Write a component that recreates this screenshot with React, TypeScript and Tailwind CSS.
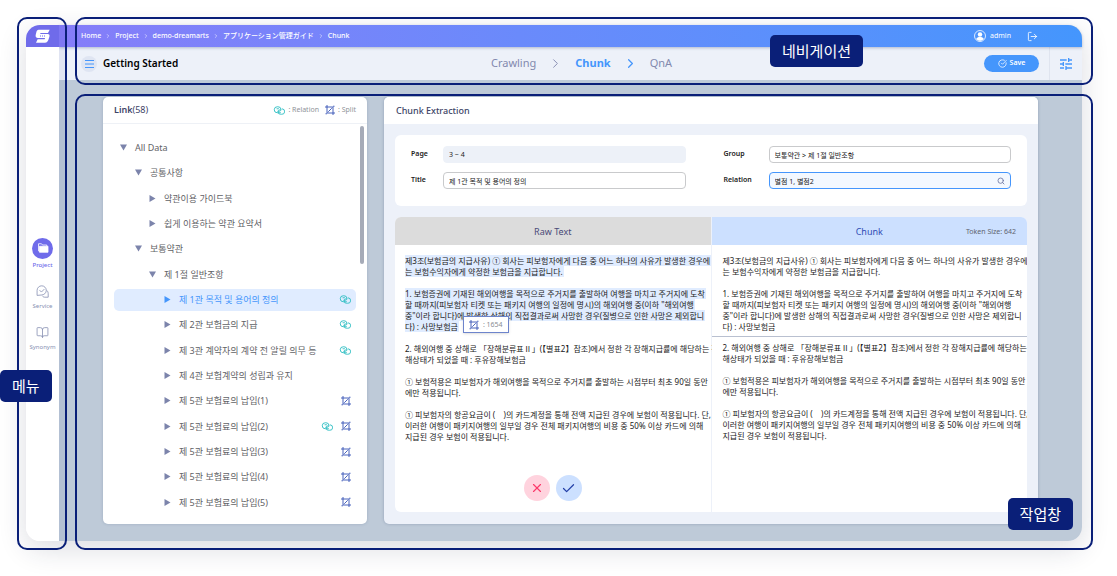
import React, { useState } from 'react';
import { BookOpen, Check, ChevronRight, CircleCheckBig, LogOut, Search, X } from 'lucide-react';
import { MdTune } from 'react-icons/md';
import clsx from 'clsx';

interface TreeItem {
  id: string;
  label: string;
  level: 0 | 1 | 2 | 3;
  open?: boolean;
  relation?: boolean;
  split?: boolean;
}

const TREE: TreeItem[] = [
  { id: 'all', label: 'All Data', level: 0, open: true },
  { id: 'common', label: '공통사항', level: 1, open: true },
  { id: 'guide', label: '약관이용 가이드북', level: 2 },
  { id: 'easy', label: '쉽게 이용하는 약관 요약서', level: 2 },
  { id: 'terms', label: '보통약관', level: 1, open: true },
  { id: 'section1', label: '제 1절 일반조항', level: 2, open: true },
  { id: 'part1', label: '제 1관 목적 및 용어의 정의', level: 3, relation: true },
  { id: 'part2', label: '제 2관 보험금의 지급', level: 3, relation: true },
  { id: 'part3', label: '제 3관 계약자의 계약 전 알릴 의무 등', level: 3, relation: true },
  { id: 'part4', label: '제 4관 보험계약의 성립과 유지', level: 3 },
  { id: 'part5-1', label: '제 5관 보험료의 납입(1)', level: 3, split: true },
  { id: 'part5-2', label: '제 5관 보험료의 납입(2)', level: 3, relation: true, split: true },
  { id: 'part5-3', label: '제 5관 보험료의 납입(3)', level: 3, split: true },
  { id: 'part5-4', label: '제 5관 보험료의 납입(4)', level: 3, split: true },
  { id: 'part5-5', label: '제 5관 보험료의 납입(5)', level: 3, split: true },
];

const INDENT = ['pl-[6px]', 'pl-[21px]', 'pl-[35px]', 'pl-[50px]'];

const INTRO = [
  '제3조(보험금의 지급사유) ① 회사는 피보험자에게 다음 중 어느 하나의 사유가 발생한 경우에',
  '는 보험수익자에게 약정한 보험금을 지급합니다.',
];

const CLAUSE_1 = [
  '1. 보험증권에 기재된 해외여행을 목적으로 주거지를 출발하여 여행을 마치고 주거지에 도착',
  '할 때까지(피보험자 티켓 또는 패키지 여행의 일정에 명시)의 해외여행 중(이하 "해외여행',
  '중"이라 합니다)에 발생한 상해의 직접결과로써 사망한 경우(질병으로 인한 사망은 제외합니',
  '다) : 사망보험금',
];

const REST = [
  [
    '2. 해외여행 중 상해로 「장해분류표Ⅱ」(【별표2】참조)에서 정한 각 장해지급률에 해당하는 장',
    '해상태가 되었을 때 : 후유장해보험금',
  ],
  [
    '① 보험적용은 피보험자가 해외여행을 목적으로 주거지를 출발하는 시점부터 최초 90일 동안',
    '에만 적용됩니다.',
  ],
  [
    '① 피보험자의 항공요금이 (    )의 카드계정을 통해 전액 지급된 경우에 보험이 적용됩니다. 단,',
    '이러한 여행이 패키지여행의 일부일 경우 전체 패키지여행의 비용 중 50% 이상 카드에 의해',
    '지급된 경우 보험이 적용됩니다.',
  ],
];

/* ---------- icons ---------- */

function Logo() {
  return (
    <svg viewBox="0 0 45 42" className="h-[14px] w-[15px]" fill="#fff">
      <path d="M11 2h33l-5 10H17c-2 0-2 3 0 3h21c5 0 7 4 5 9l-3 9c-2 5-5 8-10 8H3l5-10h20c3 0 3-4 0-4H9c-6 0-8-4-7-9l2-8c1-5 3-8 7-8z" />
      <path d="M15 21h3m3 0h3m3 0h3" stroke="#6b68ea" strokeWidth="3" />
    </svg>
  );
}

function RelationIcon() {
  return (
    <svg viewBox="0 0 24 18" className="h-[9px] w-[12px]" fill="none" stroke="#2bbdc2" strokeWidth="1.8" strokeLinecap="round">
      <path d="M15 13.5H8.5A6 6 0 0 1 8.500 1.500h1.500a6 6 0 0 1 6 5.500c0 2-1.500 3.500-3.500 3.500H10" />
      <path d="M8 5.500h3M18.500 5.500a5.500 5.500 0 0 1-1.500 11h-2a5 5 0 0 1-5-4.500c0-3 2-4.500 5-4.500" />
    </svg>
  );
}

function SplitIcon() {
  return (
    <svg viewBox="0 0 20 20" className="h-[10px] w-[10px]" fill="none" stroke="#3450b4" strokeWidth="1.8">
      <path d="M4 0v16h16M0 4h16v16M6.500 13.500l7-7" />
      <path d="M1 17.500h3M16 2.500h3" />
    </svg>
  );
}

function Arrow({ open }: { open?: boolean }) {
  return (
    <svg viewBox="0 0 7 7" className="h-[7px] w-[7px] shrink-0" fill="currentColor">
      <path d={open ? 'M0 .5h7L3.500 6.500z' : 'M.5 0v7l6-3.500z'} />
    </svg>
  );
}

function UserIcon() {
  return (
    <svg viewBox="0 0 24 24" className="h-[12px] w-[12px]" fill="none">
      <circle cx="12" cy="12" r="11" stroke="#fff" strokeWidth="1.600" />
      <circle cx="12" cy="9" r="4.500" fill="#fff" />
      <path d="M4.500 18c1-3 4-4 7.500-4s6.500 1 7.500 4c-2 2.500-4.500 3.500-7.500 3.500S6.500 20.500 4.500 18z" fill="#fff" />
    </svg>
  );
}

function FolderIcon() {
  return (
    <svg viewBox="0 0 24 24" className="h-[12px] w-[12px]" fill="none" stroke="#fff" strokeWidth="1.600" strokeLinejoin="round">
      <path d="M3 18.500V3.500h6l2 2.500h8.500v2.500" />
      <path d="M5 8.500h17v12H5z" fill="#fff" />
    </svg>
  );
}

function ServiceIcon() {
  return (
    <svg viewBox="0 0 24 24" className="h-[13px] w-[13px]" fill="none" stroke="currentColor" strokeWidth="1.500" strokeLinecap="round" strokeLinejoin="round">
      <path d="M2 18.500V10a8.500 8.500 0 1 1 8.500 8.500z" />
      <path d="M7 10l3 3 5-5" />
      <path d="M20.500 10.500c1.500 1.500 2 3.500 2 5.500v6.500h-6c-2 0-3.500-.5-4.500-2" />
    </svg>
  );
}

/* ---------- parts ---------- */

function Sidebar() {
  return (
    <aside className="z-10 flex w-[33px] shrink-0 flex-col rounded-l-[14px] bg-white shadow-[8px_0_0_rgba(20,40,130,0.06)]">
      <a href="#home" aria-label="Home" className="flex h-[22px] items-center justify-center rounded-tl-[14px] bg-[#6f6bea]">
        <Logo />
      </a>
      <nav className="flex flex-1 flex-col items-center justify-center gap-4 text-[6px] leading-[8px] text-[#8790b3]">
        <a href="#project" className="flex flex-col items-center gap-[2px] font-medium text-[#6f6bea]">
          <span className="flex h-[21px] w-[21px] items-center justify-center rounded-full bg-[#6f6bea]">
            <FolderIcon />
          </span>
          Project
        </a>
        <a href="#service" className="flex flex-col items-center gap-1">
          <ServiceIcon />
          Service
        </a>
        <a href="#synonym" className="flex flex-col items-center gap-1">
          <BookOpen className="h-[13px] w-[13px]" strokeWidth={1.5} />
          Synonym
        </a>
      </nav>
    </aside>
  );
}

function TopBar() {
  const crumbs = ['Home', 'Project', 'demo-dreamarts', 'アプリケーション管理ガイド', 'Chunk'];

  return (
    <div className="relative flex h-[22px] items-center justify-between rounded-tr-[14px] bg-linear-to-r from-[#857df9] via-[#6a8afb] via-45% to-[#4496fd] pr-[44px] pl-[22px] text-[7px] text-white shadow-[0_1px_3px_rgba(60,80,130,0.35)]">
      <nav className="flex items-center gap-1 font-medium">
        {crumbs.map((crumb, index) => (
          <React.Fragment key={crumb}>
            {index > 0 && <ChevronRight className="h-[6px] w-[6px]" />}
            <a href="#crumb">{crumb}</a>
          </React.Fragment>
        ))}
      </nav>
      <div className="flex items-center gap-4">
        <span className="flex items-center gap-1">
          <UserIcon />
          admin
        </span>
        <button type="button" aria-label="Log out">
          <LogOut className="h-[11px] w-[11px]" strokeWidth={1.8} />
        </button>
      </div>
    </div>
  );
}

function Toolbar() {
  return (
    <header className="grid h-[33px] grid-cols-[1fr_auto_1fr] items-center bg-[#edf1f9] pl-[22px]">
      <div className="flex items-center gap-[6px]">
        <button type="button" aria-label="Menu" className="flex h-4 w-4 items-center justify-center rounded-full bg-[#dfe5f2]">
          <svg viewBox="0 0 9 8" className="h-[8px] w-[9px]" stroke="#4596fc" strokeWidth="1">
            <path d="M0 .5h9M0 4h9M0 7.500h9" />
          </svg>
        </button>
        <h1 className="text-[10px] font-semibold text-black">Getting Started</h1>
      </div>
      <nav className="flex items-center gap-[12px] text-[11px] text-[#8289ae]">
        <a href="#crawling">Crawling</a>
        <ChevronRight className="h-[15px] w-[15px]" strokeWidth={1.5} />
        <a href="#chunk" className="font-bold text-[#4596fc]">Chunk</a>
        <ChevronRight className="h-[15px] w-[15px] text-[#4596fc]" strokeWidth={2} />
        <a href="#qna">QnA</a>
      </nav>
      <div className="flex h-full items-center justify-end">
        <button type="button" className="mr-[10px] flex h-[17px] w-[55px] items-center justify-center gap-[3px] rounded-full bg-[#4596fc] text-[7px] font-semibold text-white">
          <CircleCheckBig className="h-[9px] w-[9px]" />
          Save
        </button>
        <button type="button" aria-label="Settings" className="flex h-full w-[33px] items-center justify-center border-l border-[#dfe4ef] text-[#4596fc]">
          <MdTune className="h-[16px] w-[16px]" />
        </button>
      </div>
    </header>
  );
}

function LinkPanel() {
  const [selected, setSelected] = useState('part1');

  return (
    <section className="flex flex-col rounded-[5px] bg-white shadow-[0_0_3px_rgba(60,80,120,0.25)]">
      <div className="flex h-[27px] items-center justify-between border-b border-[#eef1f6] px-[11px]">
        <h2 className="text-[9px] text-[#3d4466]">
          <span className="font-semibold">Link</span>(58)
        </h2>
        <div className="flex items-center gap-[6px] text-[7px] text-[#909399]">
          <span className="flex items-center gap-[3px]"><RelationIcon /> : Relation</span>
          <span className="flex items-center gap-[3px]"><SplitIcon /> : Split</span>
        </div>
      </div>
      <div className="flex flex-1 pr-[3px] pb-[9px] pl-[11px]">
        <ul className="flex flex-1 flex-col pt-[11px] text-[9px] text-[#5f6266]">
          {TREE.map((item) => {
            const active = item.id === selected;
            return (
              <li key={item.id} className="flex flex-1 items-center">
                <button
                  type="button"
                  onClick={() => setSelected(item.id)}
                  className={clsx(
                    'flex h-[22px] w-full items-center gap-2 rounded-[5px] pr-[5px] text-left whitespace-nowrap',
                    INDENT[item.level],
                    active && 'bg-[#e0ecff] text-[#4596fc]',
                  )}
                >
                  <span className={active ? 'text-[#4596fc]' : 'text-[#7c84ab]'}>
                    <Arrow open={item.open} />
                  </span>
                  <span className="flex-1">{item.label}</span>
                  {item.relation && <RelationIcon />}
                  {item.split && <SplitIcon />}
                </button>
              </li>
            );
          })}
        </ul>
        <div className="mt-[2px] ml-[4px] h-[138px] w-[4px] rounded-full bg-[#a6abb8]" />
      </div>
    </section>
  );
}

function DetailForm() {
  const label = 'text-[7px] font-semibold text-[#222]';
  const input = 'h-[17px] w-full min-w-0 rounded-[4px] border px-[5px] text-[7px] text-[#222] outline-none';

  return (
    <form className="grid grid-cols-[32px_1fr_83px_1fr] items-center gap-y-[9px] rounded-[6px] bg-white px-4 pt-[11px] pb-[17px]">
      <label htmlFor="page" className={label}>Page</label>
      <input id="page" readOnly defaultValue="3 ~ 4" className={clsx(input, 'border-[#edf1f8] bg-[#edf1f8]')} />
      <label htmlFor="group" className={clsx(label, 'pl-[38px]')}>Group</label>
      <input id="group" defaultValue="보통약관 > 제 1절 일반조항" className={clsx(input, 'border-[#c9cacc]')} />
      <label htmlFor="title" className={label}>Title</label>
      <input id="title" defaultValue="제 1관 목적 및 용어의 정의" className={clsx(input, 'border-[#c9cacc]')} />
      <label htmlFor="relation" className={clsx(label, 'pl-[38px]')}>Relation</label>
      <div className="flex h-[17px] items-center rounded-[4px] border border-[#4596fc] bg-[#f3f8ff] pr-[5px]">
        <input id="relation" defaultValue="별점 1, 별점2" className="h-full w-full min-w-0 flex-1 px-[5px] text-[7px] text-[#222] outline-none" />
        <Search className="h-[8px] w-[8px] text-[#6a73a0]" strokeWidth={2.5} />
      </div>
    </form>
  );
}

function Lines({ lines }: { lines: string[] }) {
  return (
    <p className="whitespace-pre">
      {lines.map((line) => (
        <span key={line} className="block">{line}</span>
      ))}
    </p>
  );
}

function Marked({ lines, tokens }: { lines: string[]; tokens?: number }) {
  return (
    <p className="whitespace-pre">
      {lines.map((line, index) => (
        <mark key={line} className="relative block w-fit bg-[#e0ecff] pr-[1px] text-inherit">
          {line}
          {tokens && index === lines.length - 1 && (
            <span className="absolute -top-[5px] left-full ml-1 flex h-[17px] items-center gap-1 border border-[#6d84cc] bg-white px-[5px] text-[7px] text-[#8b8e94] shadow-sm">
              <SplitIcon />: {tokens}
            </span>
          )}
        </mark>
      ))}
    </p>
  );
}

function ChunkPanel() {
  return (
    <section className="flex flex-col rounded-[5px] bg-[#edf1f9] shadow-[0_0_3px_rgba(60,80,120,0.35)]">
      <h2 className="flex h-[27px] items-center rounded-t-[5px] bg-white px-[12px] text-[9px] font-medium text-[#3d4466]">
        Chunk Extraction
      </h2>
      <div className="flex flex-1 flex-col gap-[11px] px-[11px] pt-[11px] pb-[12px]">
        <DetailForm />
        <div className="grid flex-1 grid-cols-2 gap-px overflow-hidden rounded-[6px] text-[8px] leading-[11px] text-[#222]">
          <div className="flex flex-col bg-white">
            <h3 className="flex h-[28px] items-center justify-center bg-[#dcdcdc] text-[9px] text-[#4a4a78]">Raw Text</h3>
            <div className="flex flex-1 flex-col gap-[11px] pt-[10px] pb-[11px] pl-[10px]">
              <Marked lines={INTRO} />
              <Marked lines={CLAUSE_1} tokens={1654} />
              {REST.map((lines) => (
                <Lines key={lines[0]} lines={lines} />
              ))}
              <div className="mt-auto flex justify-center gap-[6px] pr-[10px]">
                <button type="button" aria-label="Cancel" className="flex h-[26px] w-[26px] items-center justify-center rounded-full bg-[#ffd3de] text-[#fb3a6b]">
                  <X className="h-[14px] w-[14px]" />
                </button>
                <button type="button" aria-label="Confirm" className="flex h-[26px] w-[26px] items-center justify-center rounded-full bg-[#cce0ff] text-[#2440a8]">
                  <Check className="h-[15px] w-[15px]" />
                </button>
              </div>
            </div>
          </div>
          <div className="bg-white">
            <div className="grid h-[28px] grid-cols-[1fr_auto_1fr] items-center bg-[#cce0ff] px-[11px]">
              <h3 className="col-start-2 text-[9px] text-[#2f4db5]">Chunk</h3>
              <span className="text-right text-[7px] text-[#5f6470]">Token Size: 642</span>
            </div>
            <div className="flex flex-col gap-[11px] border-b border-[#b9c0d0] pt-[10px] pb-[4px] pl-[11px]">
              <Lines lines={INTRO} />
              <Lines lines={CLAUSE_1} />
            </div>
            <div className="flex flex-col gap-[11px] pt-[5px] pl-[11px]">
              {REST.map((lines) => (
                <Lines key={lines[0]} lines={lines} />
              ))}
            </div>
          </div>
        </div>
      </div>
    </section>
  );
}

// Outline drawn over a region of the screen, with its name tag
function Callout({ label, className, tagClassName }: { label: string; className: string; tagClassName: string }) {
  return (
    <>
      <div className={clsx('pointer-events-none absolute z-20 rounded-[10px] border-2 border-[#0a1f78]', className)} />
      <div className={clsx('absolute z-20 flex h-8 items-center justify-center rounded-[5px] bg-[#0a1f78] px-3 text-[15px] whitespace-nowrap text-white', tagClassName)}>
        {label}
      </div>
    </>
  );
}

export default function App() {
  return (
    <div className="relative flex min-h-screen overflow-hidden bg-white pt-[25px] pr-[35px] pb-[35px] pl-[26px] font-['Noto_Sans','Noto_Sans_CJK_KR','Noto_Sans_CJK_JP',sans-serif]">
      <div className="flex flex-1 rounded-[14px] shadow-[0_8px_28px_rgba(30,35,70,0.16)]">
        <Sidebar />
        <div className="flex min-w-0 flex-1 flex-col rounded-r-[14px] bg-[#becad8]">
          <TopBar />
          <Toolbar />
          <main className="grid flex-1 grid-cols-[264px_1fr] gap-[17px] pt-[17px] pr-[44px] pb-[17px] pl-[44px]">
            <LinkPanel />
            <ChunkPanel />
          </main>
        </div>
      </div>

      <Callout label="메뉴" className="top-[17px] bottom-[26px] left-[17px] w-[50px]" tagClassName="top-[370px] left-0" />
      <Callout label="네비게이션" className="top-[17px] right-[24px] left-[75px] h-[68px]" tagClassName="top-[35px] right-[254px]" />
      <Callout label="작업창" className="top-[94px] right-[24px] bottom-[26px] left-[75px]" tagClassName="right-[44px] bottom-[46px]" />
    </div>
  );
}
